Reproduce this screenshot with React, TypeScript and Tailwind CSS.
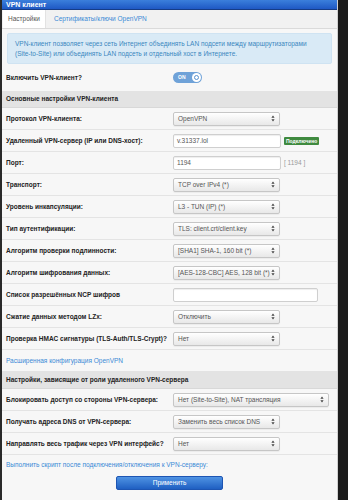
import React from "react";

const font = { fontFamily: '"Liberation Sans", Arial, sans-serif' };

const Arrows: React.FC = () => (
   <svg width="4" height="7" viewBox="0 0 4 7">
      <path d="M2 0.5 L3.6 2.8 L0.4 2.8 Z" fill="#444" />
      <path d="M2 6.5 L3.6 4.2 L0.4 4.2 Z" fill="#444" />
   </svg>
);

interface SelectProps {
   value: string;
   wide?: boolean;
}

const Select: React.FC<SelectProps> = ({ value, wide }) => (
   <div
      className={
         (wide ? "w-[156px] " : "w-[107px] ") +
         "h-[14px] rounded-[2px] border border-[#c6c6c6] bg-linear-to-b from-white to-[#e8e8e8] flex items-center justify-between pl-[4px] pr-[4px] text-[6.5px] text-[#555] shadow-[0_1px_1px_rgba(0,0,0,0.05)]"
      }
   >
      <span>{value}</span>
      <Arrows />
   </div>
);

const Input: React.FC<{ value?: string; wide?: boolean }> = ({ value, wide }) => (
   <div
      className={
         (wide ? "w-[145px] " : "w-[108px] ") +
         "h-[14px] rounded-[2px] border border-[#cfcfcf] bg-white flex items-center pl-[3px] text-[6.5px] text-[#555] shadow-[inset_0_1px_1px_rgba(0,0,0,0.07)]"
      }
   >
      {value}
   </div>
);

const Row: React.FC<{ label: string; children: React.ReactNode }> = ({ label, children }) => (
   <div className="h-[22px] border-b border-[#e4e4e4] flex items-center">
      <div className="w-[171px] pl-[4px] font-bold text-[6.5px] text-[#222]">{label}</div>
      <div className="flex items-center gap-[3px]">{children}</div>
   </div>
);

const SectionHeader: React.FC<{ title: string; h: string }> = ({ title, h }) => (
   <div className={h + " bg-[#e3e3e3] border-b border-[#d8d8d8] flex items-center pl-[4px] font-bold text-[6.5px] text-[#222]"}>
      {title}
   </div>
);

export default function App() {
   return (
      <div className="w-[348px] h-[500px] flex bg-[#1b1b1b] overflow-hidden" style={font}>
         <div className="w-[338px] h-full bg-[#f7f7f7] border-l-2 border-[#2a2a2a] border-r border-r-[#d0d0d0] flex flex-col">
            <div className="h-[9px] bg-linear-to-b from-[#3b7fdc] to-[#1f58c4] pl-[4px] flex items-center">
               <div className="text-[7px] leading-[8px] font-bold text-white">VPN клиент</div>
            </div>
            <div className="h-[1px] bg-[#163c86]" />

            <div className="h-[19px] bg-[#f1f1f1] border-b border-[#dadada] flex items-stretch">
               <div className="ml-[1px] w-[43px] bg-white border-r border-[#e2e2e2] flex items-center justify-center text-[6.5px] text-[#555]">
                  Настройки
               </div>
               <div className="pl-[8px] flex items-center text-[6.5px] text-[#3a8ad6]">
                  Сертификаты/ключи OpenVPN
               </div>
            </div>

            <div className="mt-[4px] mx-[5px] h-[31px] rounded-[2px] bg-[#d9eaf6] border border-[#cfe3f2] pl-[7px] flex flex-col justify-center text-[6.5px] leading-[10px] text-[#3a87c0]">
               <div>VPN-клиент позволяет через сеть Интернет объединять LAN подсети между маршрутизаторами</div>
               <div>(Site-to-Site) или объединять LAN подсеть и отдельный хост в Интернете.</div>
            </div>

            <div className="h-[27px] flex items-center">
               <div className="w-[171px] pl-[4px] font-bold text-[6.5px] text-[#222]">Включить VPN-клиент?</div>
               <div className="w-[29px] h-[11px] rounded-full bg-[#6fa2d8] flex items-center justify-between pl-[5px] pr-[1px]">
                  <span className="text-[5px] font-bold text-white">ON</span>
                  <span className="w-[9px] h-[9px] rounded-full bg-white flex items-center justify-center">
                     <span className="w-[5px] h-[5px] rounded-full border-[1.5px] border-[#5b93d0]" />
                  </span>
               </div>
            </div>

            <SectionHeader title="Основные настройки VPN-клиента" h="h-[17px]" />

            <Row label="Протокол VPN-клиента:">
               <Select value="OpenVPN" />
            </Row>
            <Row label="Удаленный VPN-сервер (IP или DNS-хост):">
               <Input value="v.31337.lol" />
               <span className="h-[8px] px-[2px] rounded-[1px] bg-[#3f8a3f] text-white text-[5px] leading-[8px] font-bold">
                  Подключено
               </span>
            </Row>
            <Row label="Порт:">
               <Input value="1194" />
               <span className="text-[6.5px] text-[#999]">[ 1194 ]</span>
            </Row>
            <Row label="Транспорт:">
               <Select value="TCP over IPv4 (*)" />
            </Row>
            <Row label="Уровень инкапсуляции:">
               <Select value="L3 - TUN (IP) (*)" />
            </Row>
            <Row label="Тип аутентификации:">
               <Select value="TLS: client.crt/client.key" />
            </Row>
            <Row label="Алгоритм проверки подлинности:">
               <Select value="[SHA1] SHA-1, 160 bit (*)" />
            </Row>
            <Row label="Алгоритм шифрования данных:">
               <Select value="[AES-128-CBC] AES, 128 bit (*)" />
            </Row>
            <Row label="Список разрешённых NCP шифров">
               <Input wide />
            </Row>
            <Row label="Сжатие данных методом LZx:">
               <Select value="Отключить" />
            </Row>
            <Row label="Проверка HMAC сигнатуры (TLS-Auth/TLS-Crypt)?">
               <Select value="Нет" />
            </Row>

            <div className="h-[21px] flex items-center pl-[4px] text-[6.5px] text-[#3a8ad6]">
               Расширенная конфигурация OpenVPN
            </div>

            <SectionHeader title="Настройки, зависящие от роли удаленного VPN-сервера" h="h-[18px]" />

            <Row label="Блокировать доступ со стороны VPN-сервера:">
               <Select value="Нет (Site-to-Site), NAT трансляция" wide />
            </Row>
            <Row label="Получать адреса DNS от VPN-сервера:">
               <Select value="Заменить весь список DNS" />
            </Row>
            <Row label="Направлять весь трафик через VPN интерфейс?">
               <Select value="Нет" />
            </Row>

            <div className="h-[19px] flex items-center pl-[4px] text-[6.5px] text-[#3a8ad6]">
               Выполнить скрипт после подключения/отключения к VPN-серверу:
            </div>

            <div className="mt-[2px] flex pl-[114px]">
               <div className="w-[107px] h-[14px] rounded-[2px] border border-[#1d55b3] bg-linear-to-b from-[#4f93e3] to-[#1f5fc2] flex items-center justify-center text-[6.5px] text-white">
                  Применить
               </div>
            </div>
         </div>
         <div className="flex-1" />
      </div>
   );
}
